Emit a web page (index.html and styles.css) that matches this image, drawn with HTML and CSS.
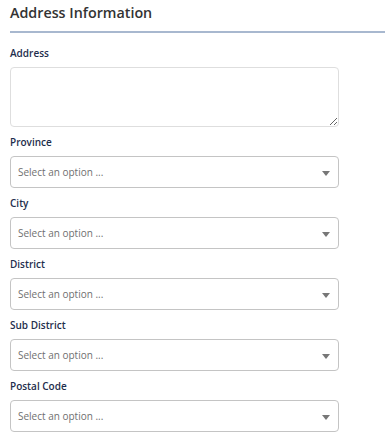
FILE: index.html
```html
<!DOCTYPE html>
<html lang="en">
<head>
<meta charset="utf-8">
<title>Address Information</title>
<link rel="stylesheet" href="styles.css">
</head>
<body>
<section class="panel">
  <header class="panel-head">
    <h2 class="panel-title">Address Information</h2>
  </header>
  <form class="form">
    <div class="field">
      <label class="label">Address</label>
      <textarea class="textarea"></textarea>
    </div>
    <div class="field">
      <label class="label">Province</label>
      <div class="select"><span class="placeholder">Select an option ...</span><span class="arrow"></span></div>
    </div>
    <div class="field">
      <label class="label">City</label>
      <div class="select"><span class="placeholder">Select an option ...</span><span class="arrow"></span></div>
    </div>
    <div class="field">
      <label class="label">District</label>
      <div class="select"><span class="placeholder">Select an option ...</span><span class="arrow"></span></div>
    </div>
    <div class="field">
      <label class="label">Sub District</label>
      <div class="select"><span class="placeholder">Select an option ...</span><span class="arrow"></span></div>
    </div>
    <div class="field">
      <label class="label">Postal Code</label>
      <div class="select"><span class="placeholder">Select an option ...</span><span class="arrow"></span></div>
    </div>
  </form>
</section>
</body>
</html>
```

FILE: styles.css
```css
* { box-sizing: border-box; }
html, body { margin: 0; padding: 0; background: #fff; }
body {
  font-family: "Open Sans", "Noto Sans", Arial, sans-serif;
  color: #333;
}
.panel { padding-left: 10px; }
.panel-head {
  padding-top: 1px;
  padding-bottom: 6px;
  border-bottom: 2px solid #a8b8cf;
}
.panel-title {
  margin: 0;
  font-size: 14.3px;
  line-height: 24px;
  font-weight: 600;
  color: #333;
}
.form {
  display: flex;
  flex-direction: column;
  gap: 8px;
  padding-top: 13px;
  width: 329px;
}
.field {
  display: flex;
  flex-direction: column;
  gap: 6px;
}
.label {
  font-size: 10px;
  line-height: 15px;
  font-weight: 600;
  color: #1e2e4c;
}
.textarea {
  display: block;
  width: 100%;
  height: 60px;
  border: 1px solid #dedede;
  border-radius: 4px;
  font-family: inherit;
  resize: vertical;
}
.select {
  height: 32px;
  border: 1px solid #c4c4c4;
  border-radius: 4px;
  display: flex;
  align-items: center;
  justify-content: space-between;
  padding: 0 8px 0 7px;
}
.placeholder {
  font-size: 10px;
  color: #6f6f6f;
}
.arrow {
  width: 0;
  height: 0;
  border-style: solid;
  border-width: 5px 4px 0 4px;
  border-color: #777 transparent transparent transparent;
  margin-top: 2px;
}
```
